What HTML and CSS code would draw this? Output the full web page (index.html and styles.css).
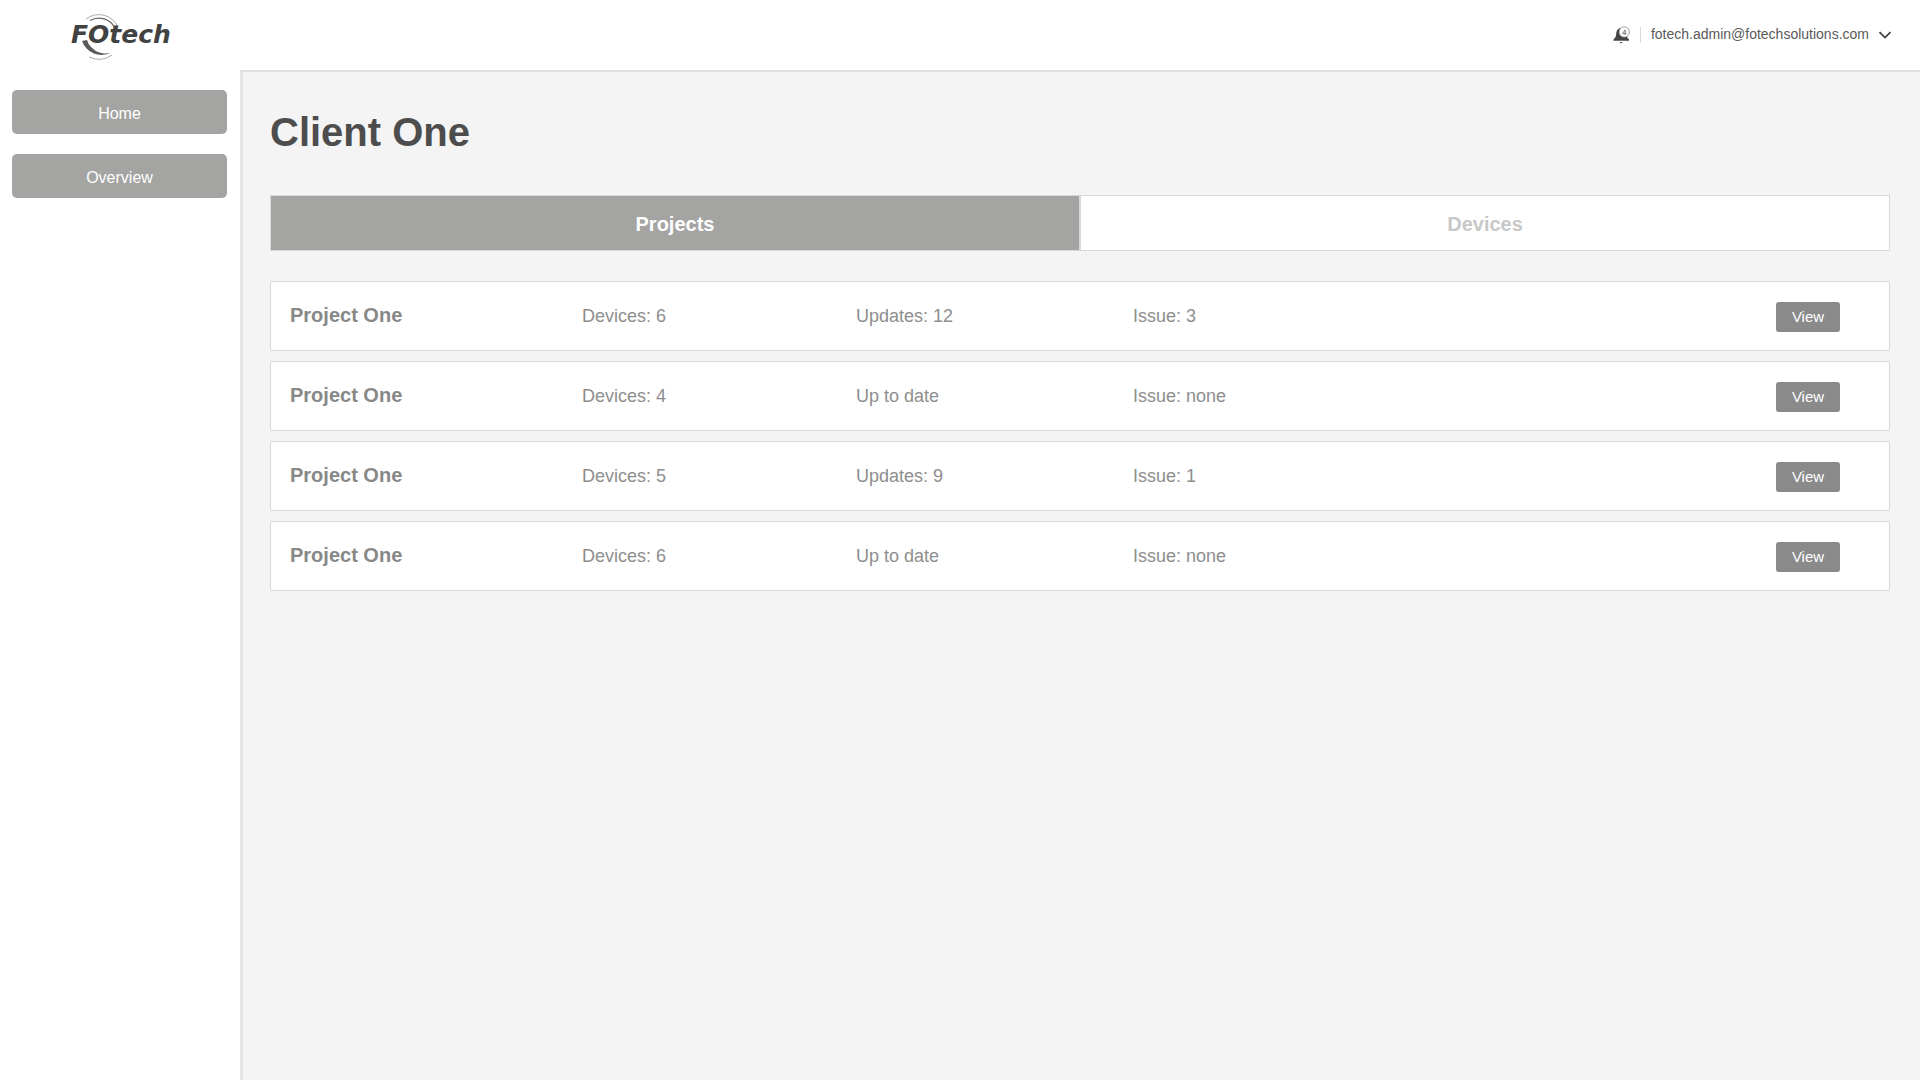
FILE: index.html
```html
<!DOCTYPE html>
<html lang="en">
<head>
<meta charset="utf-8">
<title>Client One</title>
<link rel="stylesheet" href="styles.css">
</head>
<body>
<div class="app">
  <header class="topbar">
    <a class="logo" href="#">
      <svg class="logo-swirl" viewBox="0 0 50 50" aria-hidden="true">
        <path class="swirl-thin" d="M12 8A21 21 0 0 1 44 16"/>
        <path class="swirl-mid" d="M16 9.500A18 18 0 0 1 41 17"/>
        <path class="swirl-fill" d="M8 30A20.500 20.500 0 0 0 37 41.500A19 19 0 0 1 17 36Q14 33 13 29Z"/>
        <path class="swirl-thin" d="M15 46A23 23 0 0 0 38 44"/>
      </svg>
      <span class="logo-text">F<span class="logo-o">o</span>tech</span>
    </a>
    <div class="user">
      <span class="bell">
        <svg viewBox="0 0 20 20" width="20" height="20" aria-hidden="true">
          <path class="bell-body" d="M8.500 3c-3 .5-4.200 3-4.300 5.800 0 2.600-1 4.300-2.700 5.700v1.300h15.500v-1.300c-1.100-1-1.700-2-2-3.300z"/>
          <path class="bell-body" d="M7.500 17h3.200l-1.600 1.600z"/>
          <circle class="bell-badge" cx="12.200" cy="7" r="5.200"/>
          <text class="bell-count" x="12.200" y="10">4</text>
        </svg>
      </span>
      <span class="divider"></span>
      <span class="email">fotech.admin@fotechsolutions.com</span>
      <svg class="chevron" viewBox="0 0 14 8" width="14" height="8" aria-hidden="true">
        <path d="M1.500 1.200L7 6.500l5.500-5.300"/>
      </svg>
    </div>
  </header>
  <div class="body">
    <nav class="sidebar">
      <a class="nav-btn" href="#">Home</a>
      <a class="nav-btn" href="#">Overview</a>
    </nav>
    <main class="content">
      <h1 class="title">Client One</h1>
      <div class="tabs">
        <button class="tab tab-active">Projects</button>
        <button class="tab">Devices</button>
      </div>
      <div class="rows">
        <div class="row">
          <span class="name">Project One</span>
          <span class="col col-devices">Devices: 6</span>
          <span class="col col-updates">Updates: 12</span>
          <span class="col col-issue">Issue: 3</span>
          <button class="view">View</button>
        </div>
        <div class="row">
          <span class="name">Project One</span>
          <span class="col col-devices">Devices: 4</span>
          <span class="col col-updates">Up to date</span>
          <span class="col col-issue">Issue: none</span>
          <button class="view">View</button>
        </div>
        <div class="row">
          <span class="name">Project One</span>
          <span class="col col-devices">Devices: 5</span>
          <span class="col col-updates">Updates: 9</span>
          <span class="col col-issue">Issue: 1</span>
          <button class="view">View</button>
        </div>
        <div class="row">
          <span class="name">Project One</span>
          <span class="col col-devices">Devices: 6</span>
          <span class="col col-updates">Up to date</span>
          <span class="col col-issue">Issue: none</span>
          <button class="view">View</button>
        </div>
      </div>
    </main>
  </div>
</div>
</body>
</html>
```
FILE: styles.css
```css
* { box-sizing: border-box; }
html, body { margin: 0; height: 100%; }
body {
  font-family: "Liberation Sans", Arial, sans-serif;
  background: #fff;
  color: #4a4a4a;
  overflow: hidden;
}
.app { display: flex; flex-direction: column; height: 100vh; }

.topbar {
  flex: 0 0 70px;
  display: flex;
  align-items: center;
  justify-content: space-between;
  padding: 0 28px 0 70px;
  background: #fff;
}
.logo {
  position: relative;
  display: block;
  width: 104px;
  height: 50px;
  text-decoration: none;
}
.logo-swirl {
  position: absolute;
  left: 4px;
  top: 1px;
  width: 50px;
  height: 50px;
}
.swirl-thin { fill: none; stroke: #888; stroke-width: 0.7; }
.swirl-mid { fill: none; stroke: #666; stroke-width: 1.2; }
.swirl-fill { fill: #5a5a5a; }
.logo-text {
  position: absolute;
  left: 1px;
  top: 10px;
  font-family: "DejaVu Sans", sans-serif;
  font-weight: 700;
  font-style: italic;
  font-size: 25px;
  line-height: 30px;
  color: #424242;
  white-space: nowrap;
}
.logo-o { text-transform: uppercase; }

.user { display: flex; align-items: center; }
.bell { display: flex; width: 20px; height: 20px; margin-right: 8px; }
.bell-body { fill: #454545; }
.bell-badge { fill: #fff; stroke: #666; stroke-width: 0.6; }
.bell-count {
  font-family: "Liberation Sans", Arial, sans-serif;
  font-size: 8px;
  fill: #444;
  text-anchor: middle;
}
.divider { width: 1px; height: 16px; background: #d9d9d9; margin-right: 10px; }
.email { font-size: 14px; color: #5a5a5a; padding-bottom: 2px; }
.chevron { margin-left: 9px; }
.chevron path { fill: none; stroke: #3d3d3d; stroke-width: 1.700; }

.body { flex: 1; display: flex; min-height: 0; }
.sidebar {
  flex: 0 0 240px;
  padding: 20px 13px 0 12px;
  display: flex;
  flex-direction: column;
  gap: 20px;
}
.nav-btn {
  display: flex;
  align-items: center;
  justify-content: center;
  height: 44px;
  padding-top: 3px;
  background: #a4a4a2;
  border-radius: 5px;
  color: #fff;
  font-size: 16px;
  text-decoration: none;
}

.content {
  flex: 1;
  padding: 0 30px;
  background: #f4f4f4;
  box-shadow: inset 3px 0 0 #e4e4e4, inset 0 2px 1px #dedede;
}
.title {
  margin: 0;
  padding-top: 39px;
  height: 125px;
  font-size: 40px;
  line-height: 46px;
  font-weight: 700;
  color: #4d4d4d;
}
.tabs { display: flex; height: 56px; }
.tab {
  flex: 1;
  padding: 2px 0 0;
  font-family: inherit;
  font-size: 20px;
  font-weight: 700;
  color: #c8c8c8;
  background: #fff;
  border: 1px solid #d9d9d9;
}
.tab-active {
  background: #a4a4a2;
  color: #fff;
}
.rows { display: flex; flex-direction: column; gap: 10px; margin-top: 30px; }
.row {
  display: grid;
  grid-template-columns: 292px 274px 277px 1fr 64px;
  align-items: center;
  height: 70px;
  padding: 0 49px 0 19px;
  background: #fff;
  border: 1px solid #d9d9d9;
}
.name { font-size: 20px; font-weight: 700; color: #888; padding-bottom: 2px; }
.col { font-size: 18px; color: #8e8e8e; }
.view {
  height: 30px;
  margin-top: 2px;
  padding: 0 0 1px;
  font-family: inherit;
  font-size: 15px;
  color: #fff;
  background: #8a8a8a;
  border: 0;
  border-radius: 3px;
}
```
